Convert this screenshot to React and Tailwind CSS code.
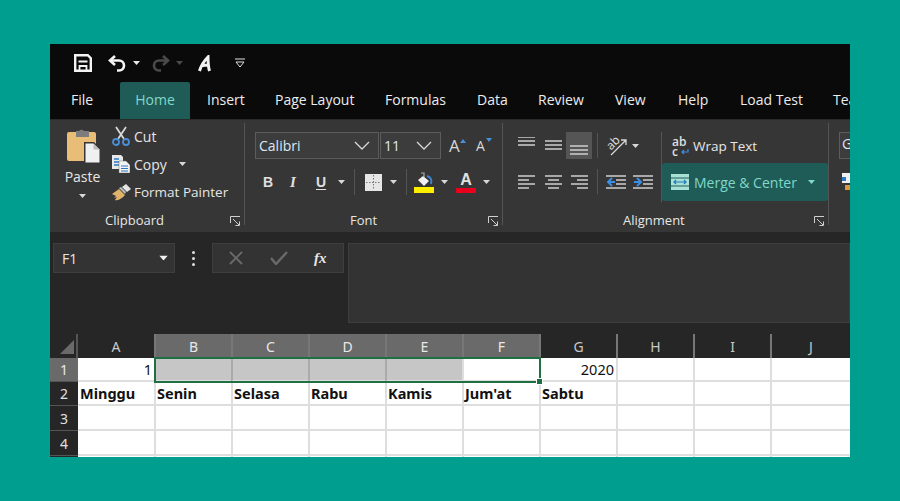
import React from 'react';

const columns = ['A', 'B', 'C', 'D', 'E', 'F', 'G', 'H', 'I', 'J'];
const tabs = [
    ['Insert', 'w-[68px]'],
    ['Page Layout', 'w-[110px]'],
    ['Formulas', 'w-[92px]'],
    ['Data', 'w-[61px]'],
    ['Review', 'w-[77px]'],
    ['View', 'w-[63px]'],
    ['Help', 'w-[62px]'],
    ['Load Test', 'w-[93px]'],
    ['Team', 'w-[60px]'],
];
const days = ['Minggu', 'Senin', 'Selasa', 'Rabu', 'Kamis', "Jum'at", 'Sabtu', '', '', ''];

function Caret({ className = '', color = '#d8d8d8' }) {
    return (
        <svg width="7" height="4" viewBox="0 0 7 4" className={className}>
            <path d="M0 0h7L3.5 4z" fill={color} />
        </svg>
    );
}

function Launcher({ className = '' }) {
    return (
        <svg width="11" height="11" viewBox="0 0 11 11" fill="none" stroke="#d0d0d0" className={className}>
            <path d="M.5 7V.5H10" />
            <path d="M3 3l6 6M9.5 5.5v4h-4" />
        </svg>
    );
}

function Lines({ widths, y, blue }) {
    return (
        <svg width="20" height="18" viewBox="0 0 20 18" fill="none" stroke="#cfcfcf" strokeWidth="1.5">
            {widths.map(([a, b], i) => (
                <path key={i} d={`M${a} ${y + i * 4}H${b}`} />
            ))}
            {blue}
        </svg>
    );
}

function Sep({ className = '' }) {
    return <div className={`w-px bg-[#555] ${className}`} />;
}

function TitleBar() {
    return (
        <div className="h-[38px] bg-[#0a0a0a] flex items-center pl-[24px] shrink-0">
            <svg width="18" height="18" viewBox="0 0 18 18" fill="none" stroke="#f4f4f4" strokeWidth="2.4">
                <path d="M1.200 1.200h12.600l3 3v12.600H1.200z" />
                <path d="M4.500 7.500h9M5.500 17v-5h7v5" strokeWidth="1.800" />
            </svg>
            <svg width="19" height="17" viewBox="0 0 19 17" fill="none" stroke="#f4f4f4" strokeWidth="2.6" className="ml-[16px]">
                <path d="M7 1L2 5.500 7 10" />
                <path d="M2 5.500h9a5 5 0 0 1 5 5c0 3-2 5-5 5H9" />
            </svg>
            <Caret className="ml-[6px]" color="#e8e8e8" />
            <svg width="19" height="17" viewBox="0 0 19 17" fill="none" stroke="#4a4a4a" strokeWidth="2.6" className="ml-[11px]">
                <path d="M12 1l5 4.500L12 10" />
                <path d="M17 5.500H8a5 5 0 0 0-5 5c0 3 2 5 5 5h2" />
            </svg>
            <Caret className="ml-[6px]" color="#4a4a4a" />
            <svg width="13" height="17" viewBox="0 0 13 17" fill="none" stroke="#f4f4f4" strokeWidth="3" className="ml-[15px]">
                <path d="M1.500 16C3 11 7 5 10 2c0 5 0 9 1.500 14M3 11c3-1 5-1 8-1" />
            </svg>
            <svg width="10" height="10" viewBox="0 0 10 10" fill="none" stroke="#e0e0e0" className="ml-[24px]">
                <path d="M0 1h10" />
                <path d="M1 4l4 5 4-5z" />
            </svg>
        </div>
    );
}

function TabBar() {
    return (
        <div className="h-[37px] bg-[#0a0a0a] flex items-stretch pl-[21px] text-[14px] text-[#ececec] shrink-0 overflow-hidden">
            <div className="w-[49px] shrink-0 flex items-center pb-[2px]">File</div>
            <div className="w-[70px] shrink-0 bg-[#1f5c57] rounded-t-[2px] text-[#7fd8c9] flex items-center justify-center pb-[2px]">Home</div>
            <div className="w-[17px] shrink-0" />
            {tabs.map(([label, w]) => (
                <div key={label} className={`${w} shrink-0 flex items-center pb-[2px]`}>
                    {label}
                </div>
            ))}
        </div>
    );
}

function GroupLabel({ children, className = '' }) {
    return <div className={`absolute -bottom-[4px] text-[13px] text-[#e6e6e6] leading-[18px] ${className}`}>{children}</div>;
}

function ClipboardGroup() {
    return (
        <div className="relative w-[195px] h-full border-r border-[#555] flex shrink-0 pl-[15px] pt-[5px]">
            <div className="w-[47px] shrink-0 flex flex-col items-center text-[#e6e6e6] -ml-[6px]">
                <svg width="34" height="36" viewBox="0 0 34 36" className="ml-[3px]">
                    <rect x="0" y="4" width="29" height="29" rx="2" fill="#e8bd78" />
                    <path d="M9 3h3a3 3 0 0 1 5 0h5v6H9z" fill="#7c7c7c" />
                    <path d="M17 14h10l7 7v15H17z" fill="#363636" />
                    <path d="M18.500 15.500h8l6 6v13h-14z" fill="#f0f0f0" />
                    <path d="M26.500 15.500v6h6" fill="#bbb" />
                </svg>
                <span className="mt-[4px] leading-[18px] text-[14px]">Paste</span>
                <Caret className="mt-[8px]" />
            </div>
            <div className="flex flex-col text-[14px] text-[#e6e6e6] ml-[6px] -mt-[6px]">
                <div className="h-[28px] flex items-center">
                    <svg width="18" height="20" viewBox="0 0 18 20" fill="none" strokeWidth="1.800">
                        <path d="M4 1l8 12M14 1L6 13" stroke="#d8d8d8" />
                        <circle cx="4" cy="16" r="3" stroke="#4a90d9" />
                        <circle cx="14" cy="16" r="3" stroke="#4a90d9" />
                    </svg>
                    <span className="ml-[4px]">Cut</span>
                </div>
                <div className="h-[28px] flex items-center">
                    <svg width="18" height="18" viewBox="0 0 18 18">
                        <path d="M0 0h9l2 2v12H0z" fill="#e8e8e8" />
                        <path d="M2 4h5M2 7h5M2 10h5" stroke="#2b78c5" strokeWidth="1.400" />
                        <path d="M7 6h7l4 4v8H7z" fill="#f2f2f2" stroke="#777" strokeWidth=".5" />
                        <path d="M9 11h7M9 13.500h7M9 16h7" stroke="#2b78c5" strokeWidth="1.200" />
                    </svg>
                    <span className="ml-[4px]">Copy</span>
                    <Caret className="ml-[12px]" />
                </div>
                <div className="h-[28px] flex items-center">
                    <svg width="19" height="17" viewBox="0 0 19 17">
                        <path d="M0 10l7-5 6 6c-3 4-8 6-10 5l2-3-3 1 2-2z" fill="#e0b36a" />
                        <path d="M7 4l2-1 5 5-1 2z" fill="#bdbdbd" />
                        <path d="M10 3l4-3 5 5-4 3z" fill="#e4e4e4" />
                    </svg>
                    <span className="ml-[3px] text-[13.500px]">Format Painter</span>
                </div>
            </div>
            <GroupLabel className="left-[55px]">Clipboard</GroupLabel>
            <Launcher className="absolute right-[3px] -bottom-[2px]" />
        </div>
    );
}

function Combo({ label, width }) {
    return (
        <div className={`${width} h-[27px] bg-[#3c3c3c] border border-[#5c5c5c] flex items-center justify-between pl-[3px] pr-[8px] text-[14px] text-[#dde8f5]`}>
            <span>{label}</span>
            <svg width="16" height="9" viewBox="0 0 16 9" fill="none" stroke="#d8d8d8" strokeWidth="1.300">
                <path d="M1 1l7 7 7-7" />
            </svg>
        </div>
    );
}

function FontGroup() {
    return (
        <div className="relative w-[258px] h-full border-r border-[#555] shrink-0 pt-[9px] pl-[10px]">
            <div className="flex items-center">
                <Combo label="Calibri" width="w-[124px]" />
                <div className="w-px" />
                <Combo label="11" width="w-[61px]" />
                <div className="relative ml-[8px] w-[16px] text-[17px] leading-none text-[#d8d8d8]">
                    A
                    <span className="absolute -right-[1px] top-[2px] w-0 h-0 border-x-[3px] border-x-transparent border-b-[4px] border-b-[#4a90d9]" />
                </div>
                <div className="relative ml-[11px] w-[16px] text-[14px] leading-none text-[#d8d8d8]">
                    A
                    <span className="absolute right-0 -top-[1px] w-0 h-0 border-x-[3px] border-x-transparent border-t-[4px] border-t-[#4a90d9]" />
                </div>
            </div>
            <div className="flex items-center h-[22px] mt-[12px] text-[14px] text-[#e0e0e0] font-bold">
                <span className="w-[9px] ml-[8px] font-['Liberation_Sans']">B</span>
                <span className="w-[8px] ml-[18px] font-['Liberation_Serif'] italic text-[15px]">I</span>
                <span className="w-[12px] ml-[18px] underline underline-offset-2 font-['Liberation_Sans']">U</span>
                <Caret className="ml-[10px]" />
                <Sep className="h-[26px] ml-[9px]" />
                <svg width="17" height="17" viewBox="0 0 17 17" className="ml-[10px]">
                    <path d="M0 0h17v17H0z" fill="#e6e6e6" />
                    <path d="M8.500 1v15M1 8.500h15" stroke="#777" strokeDasharray="1.500 1.500" />
                </svg>
                <Caret className="ml-[8px]" />
                <Sep className="h-[26px] ml-[9px]" />
                <svg width="20" height="21" viewBox="0 0 20 21" className="ml-[7px]">
                    <path d="M4 8l5-4 6 5-5 5z" fill="#f0f0f0" />
                    <path d="M7 1h3v4" stroke="#aaa" strokeWidth="1.200" fill="none" />
                    <path d="M13 4c4 1 5 4 4 8" stroke="#3b82d0" strokeWidth="2" fill="none" />
                    <path d="M0 15h20v6H0z" fill="#ffee00" />
                </svg>
                <Caret className="ml-[7px]" />
                <div className="ml-[8px] w-[20px] flex flex-col items-center">
                    <span className="text-[16px] leading-[16px] font-['Liberation_Sans'] font-bold text-[#e0e0e0]">A</span>
                    <span className="block w-[20px] h-[5px] bg-[#e8001c]" />
                </div>
                <Caret className="ml-[7px]" />
            </div>
            <GroupLabel className="left-[105px]">Font</GroupLabel>
            <Launcher className="absolute right-[3px] -bottom-[2px]" />
        </div>
    );
}

function AlignmentGroup() {
    return (
        <div className="relative w-[326px] h-full border-r border-[#555] shrink-0 flex pt-[9px]">
            <div className="w-[158px] pl-[14px] shrink-0">
                <div className="flex items-center h-[27px]">
                    <Lines widths={[[1, 18], [1, 18], [1, 18]]} y={0} />
                    <div className="w-[7px]" />
                    <Lines widths={[[1, 18], [1, 18], [1, 18]]} y={4} />
                    <div className="ml-[2px] w-[26px] h-[27px] bg-[#555] flex items-end justify-center pb-[1px]">
                        <Lines widths={[[1, 19], [1, 19], [1, 19]]} y={6} />
                    </div>
                    <Sep className="h-[25px] ml-[5px]" />
                    <div className="relative ml-[9px] w-[20px] h-[20px] shrink-0">
                        <span className="absolute left-[-1px] top-[0px] text-[12px] leading-[14px] text-[#e0e0e0] -rotate-45">ab</span>
                        <svg width="20" height="20" viewBox="0 0 20 20" fill="none" stroke="#d8d8d8" strokeWidth="1.300" className="absolute inset-0">
                            <path d="M4 19L19 4M14 4h5v5" />
                        </svg>
                    </div>
                    <Caret className="ml-[5px]" />
                </div>
                <div className="flex items-center h-[27px] mt-[9px]">
                    <Lines widths={[[1, 18], [1, 12], [1, 18], [1, 12]]} y={3} />
                    <div className="w-[7px]" />
                    <Lines widths={[[1, 18], [4, 15], [1, 18], [4, 15]]} y={3} />
                    <div className="w-[6px]" />
                    <Lines widths={[[1, 18], [7, 18], [1, 18], [7, 18]]} y={3} />
                    <Sep className="h-[25px] ml-[7px]" />
                    <div className="ml-[8px]">
                        <Lines
                            widths={[[0, 20], [10, 20], [10, 20], [0, 20]]}
                            y={3}
                            blue={<path d="M9 9H2m4-4L2 9l4 4" stroke="#3b8ee0" strokeWidth="2" />}
                        />
                    </div>
                    <div className="ml-[7px]">
                        <Lines
                            widths={[[0, 20], [10, 20], [10, 20], [0, 20]]}
                            y={3}
                            blue={<path d="M1 9h7M4 5l4 4-4 4" stroke="#3b8ee0" strokeWidth="2" />}
                        />
                    </div>
                </div>
            </div>
            <div className="flex flex-col w-[167px] text-[14px] border-l border-[#555] h-[70px]">
                <div className="h-[31px] flex items-center pl-[10px] pb-[2px] text-[#e6e6e6]">
                    <div className="relative w-[17px] h-[20px] shrink-0 text-[12px] leading-[10px] text-[#e0e0e0] font-semibold">
                        <div>ab</div>
                        <div>c</div>
                        <svg width="8" height="7" viewBox="0 0 8 7" fill="none" stroke="#3b8ee0" strokeWidth="1.200" className="absolute right-0 bottom-[1px]">
                            <path d="M7 0v3H1M3 1L1 3l2 2" />
                        </svg>
                    </div>
                    <span className="ml-[4px] text-[13.500px]">Wrap Text</span>
                </div>
                <div className="h-[38px] bg-[#1f5c57] rounded-[3px] flex items-center pl-[9px] text-[#7fd8c9]">
                    <svg width="18" height="18" viewBox="0 0 18 18">
                        <path d="M0 1h18v16H0z" fill="#a9e0d6" />
                        <path d="M0 5h18M0 13h18" stroke="#1f5c57" />
                        <path d="M3 9h12M5 7L3 9l2 2M13 7l2 2-2 2" stroke="#1f78b8" fill="none" strokeWidth="1.200" />
                    </svg>
                    <span className="ml-[5px]">Merge &amp; Center</span>
                    <Caret className="ml-[11px]" color="#7fd8c9" />
                </div>
            </div>
            <GroupLabel className="left-[120px]">Alignment</GroupLabel>
            <Launcher className="absolute right-[3px] -bottom-[2px]" />
        </div>
    );
}

function NumberGroup() {
    return (
        <div className="pl-[10px] pt-[9px] overflow-hidden w-[21px] shrink-0">
            <div className="w-[30px] h-[27px] bg-[#3c3c3c] border border-[#5c5c5c] text-[14px] text-[#dde8f5] pl-[2px]">G</div>
            <svg width="10" height="20" viewBox="0 0 10 20" className="mt-[12px] ml-[3px]">
                <path d="M0 2h10v10H0z" fill="#f0f0f0" />
                <path d="M0 6h4v4H0z" fill="#2b78c5" />
                <path d="M3 14h5v5H3z" fill="#d89a3c" />
            </svg>
        </div>
    );
}

function FormulaBar() {
    return (
        <div className="h-[102px] bg-[#262626] flex items-start pt-[11px] pl-[3px] shrink-0">
            <div className="w-[122px] h-[30px] bg-[#333] border border-[#3e3e3e] flex items-center justify-between pl-[8px] pr-[7px] text-[14px] text-[#e6e6e6]">
                F1
                <Caret className="scale-125" color="#f0f0f0" />
            </div>
            <div className="w-[37px] h-[30px] flex flex-col items-center justify-center gap-[3px]">
                <span className="w-[3px] h-[3px] rounded-full bg-[#e0e0e0]" />
                <span className="w-[3px] h-[3px] rounded-full bg-[#e0e0e0]" />
                <span className="w-[3px] h-[3px] rounded-full bg-[#e0e0e0]" />
            </div>
            <div className="w-[132px] h-[30px] bg-[#333] border border-[#3e3e3e] flex items-center">
                <svg width="14" height="14" viewBox="0 0 14 14" fill="none" stroke="#6a6a6a" strokeWidth="1.800" className="ml-[16px]">
                    <path d="M1 1l12 12M13 1L1 13" />
                </svg>
                <svg width="18" height="14" viewBox="0 0 18 14" fill="none" stroke="#6a6a6a" strokeWidth="2.400" className="ml-[27px]">
                    <path d="M1 7l5 6L17 1" />
                </svg>
                <span className="ml-[26px] font-['Liberation_Serif'] italic font-bold text-[15px] text-[#e6e6e6]">fx</span>
            </div>
            <div className="ml-[4px] flex-1 h-[80px] bg-[#333] border border-[#3e3e3e]" />
        </div>
    );
}

function Sheet() {
    return (
        <div className="relative flex-1 bg-white font-['Noto_Sans',sans-serif] min-h-0 overflow-hidden">
            <div className="grid grid-cols-[28px_76px_repeat(8,77px)_1fr] grid-rows-[24px_24px_24px_25px_25px_25px]">
                <div className="bg-[#262626] border-r-2 border-[#555] relative">
                    <div className="absolute left-[10px] top-[6px] w-0 h-0 border-l-[14px] border-l-transparent border-b-[14px] border-b-[#6a6a6a]" />
                </div>
                {columns.map((c) => {
                    const picked = 'BCDEF'.includes(c);
                    return (
                        <div
                            key={c}
                            className={`flex items-center justify-center text-[14px] ${c === 'A' ? '' : 'border-l-2 border-l-[#777]'} ${picked ? 'bg-[#6a6a6a] text-[#e8e8e8]' : 'bg-[#262626] text-[#c8c8c8]'}`}
                        >
                            {c}
                        </div>
                    );
                })}
                {[1, 2, 3, 4, 5].map((row) => (
                    <React.Fragment key={row}>
                        <div
                            className={`flex items-center justify-center text-[14px] border-b border-[#555] ${row === 1 ? 'bg-[#6a6a6a] text-[#e8e8e8]' : 'bg-[#262626] text-[#e0e0e0]'}`}
                        >
                            {row < 5 ? row : ''}
                        </div>
                        {columns.map((c, i) => {
                            const gray = row === 1 && 'BCDE'.includes(c);
                            let content = '';
                            if (row === 1 && c === 'A') content = '1';
                            if (row === 1 && c === 'G') content = '2020';
                            if (row === 2) content = days[i];
                            return (
                                <div
                                    key={c}
                                    className={`border-b-2 border-[#dedede] text-[14.500px] text-[#111] flex items-center pr-[2px] pt-[1px] leading-none ${c === 'A' ? 'pl-[2px]' : 'border-l-2 pl-[1px]'} ${gray ? 'bg-[#c6c6c6] border-l-[#aaa]' : 'bg-white'} ${row === 1 ? 'justify-end' : ''} ${row === 2 ? 'font-bold' : ''}`}
                                >
                                    {content}
                                </div>
                            );
                        })}
                    </React.Fragment>
                ))}
            </div>
            {/* selected range, sits over the cells */}
            <div className="absolute left-[104px] top-[23px] w-[387px] h-[26px] border-2 border-[#1e6f42] pointer-events-none">
                <div className="absolute -right-[4px] -bottom-[4px] w-[7px] h-[7px] bg-[#1e6f42] border border-white" />
            </div>
        </div>
    );
}

export default function App() {
    return (
        <div className="w-[900px] h-[501px] bg-[#009e8e] pt-[44px] pb-[44px] pl-[50px] overflow-hidden font-['Open_Sans',sans-serif]">
            <div className="w-[800px] h-[413px] flex flex-col overflow-hidden bg-[#262626]">
                <TitleBar />
                <TabBar />
                <div className="h-[113px] bg-[#363636] border-t border-[#2a2a2a] flex items-stretch shrink-0 pt-[3px] pb-[7px]">
                    <ClipboardGroup />
                    <FontGroup />
                    <AlignmentGroup />
                    <NumberGroup />
                </div>
                <FormulaBar />
                <Sheet />
            </div>
        </div>
    );
}
